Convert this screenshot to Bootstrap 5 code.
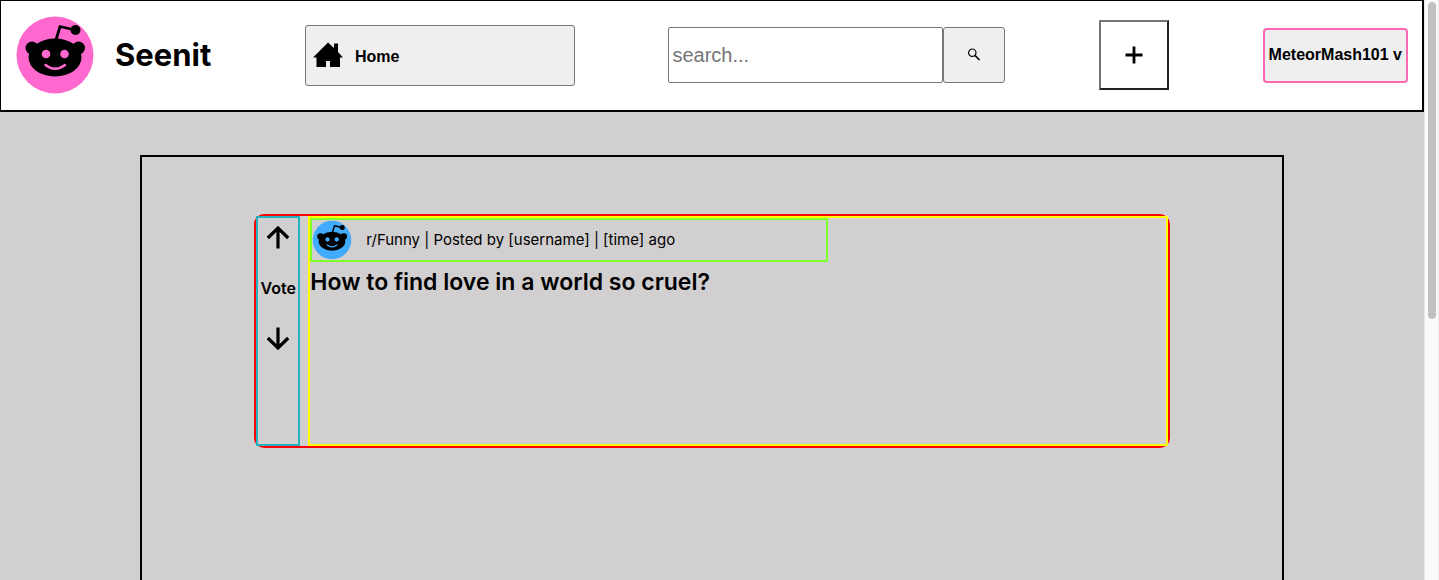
<!DOCTYPE html>
<html lang="en">
<head>
<meta charset="utf-8">
<meta name="viewport" content="width=device-width, initial-scale=1">
<title>Seenit</title>
<link href="https://cdn.jsdelivr.net/npm/bootstrap@5.3.0/dist/css/bootstrap.min.css" rel="stylesheet">
<style>
  body { background: #d1cfcf; color: #000; font-family: Inter, sans-serif; }
  svg { display: block; }
  .topbar { background: #fff; border: solid #000; border-width: 1px 2px 2px 1px; padding: 14px 14px 15px; min-height: 112px; }
  .brand { gap: 20px; color: #000; font-size: 31px; font-weight: 700; line-height: 40px; }
  .brand-logo { width: 80px; height: 80px; color: #ff69cf; }
  .control { background: #efefef; border: 1px solid #767676; color: #000; font: bold 16px/20px "Liberation Sans", sans-serif; }
  .home-btn { width: 270px; height: 61px; padding: 0 6px; gap: 11px; border-radius: 3px; }
  .search-box { width: 275px; height: 56px; padding: 0 3px; border: 1px solid #767676; border-radius: 2px; font: 20px "Liberation Sans", sans-serif; }
  .search-box::placeholder { color: #757575; }
  .search-btn { width: 62px; height: 56px; border-radius: 3px; }
  .add-btn { width: 70px; height: 70px; background: #fff; border: 2px solid; border-color: #767676 #212121 #212121 #767676; }
  .user-btn { height: 55px; padding: 0 4px; border: 2px solid #ff69b4; border-radius: 4px; }
  .feed { box-sizing: content-box; width: 80%; margin: 43px auto 0; border: 2px solid #000; border-bottom: 0; }
  .post { box-sizing: content-box; width: 80%; min-height: 230px; margin: 57px auto; gap: 8px; border: 2px solid red; border-radius: 10px; }
  .votes { width: 44px; padding-top: 7px; gap: 27px; border: 2px solid #20b2c0; font-size: 16px; font-weight: 600; line-height: 24px; }
  .vote-btn { width: 24px; height: 24px; padding: 0; border: 0; background: none; color: #000; }
  .post-body { border: 2px solid #ff0; }
  .post-meta { box-sizing: content-box; width: 60%; height: 40px; gap: 14px; border: 2px solid #7fff2a; font-size: 15px; line-height: 24px; }
  .sub-logo { width: 40px; height: 40px; color: #41abff; }
  .post-title { margin: 4px 0 0; font-size: 23px; font-weight: 600; line-height: 32px; }
  .scroll-track { width: 15px; padding: 2px 3px; background: #fafafa; border-left: 1px solid #e8e8e8; border-right: 1px solid #ededed; }
  .scroll-thumb { height: 55%; width: 8px; border-radius: 4px; background: #c1c1c1; }
</style>
</head>
<body class="d-flex min-vh-100">
<svg width="0" height="0" class="position-absolute" aria-hidden="true">
  <symbol id="alien" viewBox="15 15 80 80">
    <circle cx="55" cy="55" r="38.5" fill="currentColor"/>
    <circle cx="32" cy="48" r="6.5"/><circle cx="78.500" cy="48" r="6.500"/>
    <ellipse cx="55" cy="57.500" rx="26.500" ry="19"/>
    <path d="M56 40 60 26.500 75 30" fill="none" stroke="#000" stroke-width="2.800" stroke-linejoin="round"/>
    <circle cx="75.500" cy="30" r="5"/>
    <circle cx="46" cy="54" r="4.300" fill="currentColor"/><circle cx="64.500" cy="54" r="4.300" fill="currentColor"/>
    <path d="M45.500 65Q55 72.500 65 65" fill="none" stroke="currentColor" stroke-width="2.500" stroke-linecap="round"/>
  </symbol>
</svg>

<div class="d-flex flex-column flex-grow-1">
  <header class="topbar d-flex align-items-center justify-content-between">
    <a href="#" class="brand d-flex align-items-center text-decoration-none">
      <svg class="brand-logo" aria-hidden="true"><use href="#alien"/></svg>
      <span>Seenit</span>
    </a>
    <button type="button" class="control home-btn d-flex align-items-center">
      <svg width="32" height="28" viewBox="0 0 32 28" aria-hidden="true"><path d="M1 16.500 16 1.500 22 7V2.500H26V11L31 16.500H28V26H18V20H14V26H4.500V16.500Z"/></svg>
      <span class="pt-1">Home</span>
    </button>
    <form class="d-flex" role="search">
      <input type="search" class="search-box" placeholder="search..." aria-label="Search">
      <button type="button" class="control search-btn d-flex align-items-center justify-content-center" aria-label="Search">
        <svg width="14" height="14" viewBox="0 0 14 14" aria-hidden="true" fill="none" stroke="#000"><circle cx="5.300" cy="4.700" r="3.700" stroke-width="1.200"/><path d="M8 7.500 12.500 12" stroke-width="1.700"/></svg>
      </button>
    </form>
    <button type="button" class="add-btn d-flex align-items-center justify-content-center" aria-label="Create post">
      <svg width="18" height="18" viewBox="0 0 18 18" aria-hidden="true"><path d="M9 .5V17.500M.5 9H17.500" stroke="#000" stroke-width="2.800"/></svg>
    </button>
    <button type="button" class="control user-btn">MeteorMash101 v</button>
  </header>

  <main class="feed flex-grow-1">
    <article class="post d-flex">
      <div class="votes d-flex flex-column align-items-center">
        <button type="button" class="vote-btn" aria-label="Vote up">
          <svg width="24" height="24" viewBox="0 0 24 24" fill="none" stroke="#000" stroke-width="3.200"><path d="M12 23.500V3M1.800 13 12 3 22.200 13"/></svg>
        </button>
        <span>Vote</span>
        <button type="button" class="vote-btn" aria-label="Vote down">
          <svg width="24" height="24" viewBox="0 0 24 24" fill="none" stroke="#000" stroke-width="3.200"><path d="M12 .5V21M1.800 11 12 21 22.200 11"/></svg>
        </button>
      </div>
      <div class="post-body flex-grow-1">
        <div class="post-meta d-flex align-items-center">
          <svg class="sub-logo" aria-hidden="true"><use href="#alien"/></svg>
          <span>r/Funny | Posted by [username] | [time] ago</span>
        </div>
        <h2 class="post-title">How to find love in a world so cruel?</h2>
      </div>
    </article>
  </main>
</div>

<div class="scroll-track flex-shrink-0 position-sticky top-0 vh-100" aria-hidden="true">
  <div class="scroll-thumb"></div>
</div>
<script src="https://cdn.jsdelivr.net/npm/bootstrap@5.3.0/dist/js/bootstrap.bundle.min.js"></script>
</body>
</html>
